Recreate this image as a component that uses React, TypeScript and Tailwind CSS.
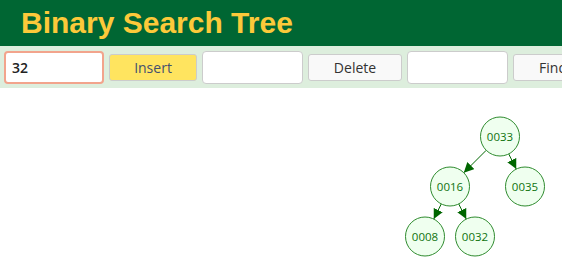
import React from "react";

type Node = { id: string; label: string; x: number; y: number };

const nodes: Node[] = [
  { id: "a", label: "0033", x: 500, y: 136.5 },
  { id: "b", label: "0016", x: 450, y: 186.5 },
  { id: "c", label: "0035", x: 525, y: 186.5 },
  { id: "d", label: "0008", x: 425, y: 236.5 },
  { id: "e", label: "0032", x: 475, y: 236.5 },
];

const edges: [string, string][] = [
  ["a", "b"],
  ["a", "c"],
  ["b", "d"],
  ["b", "e"],
];

const R = 19.5;
const TOP = 88;

function Tree() {
  const byId = Object.fromEntries(nodes.map((n) => [n.id, n]));
  return (
    <svg width={562} height={274 - TOP} className="block">
      <defs>
        <marker
          id="arrow"
          viewBox="0 0 10 10"
          refX="10"
          refY="5"
          markerWidth="10"
          markerHeight="10"
          markerUnits="userSpaceOnUse"
          orient="auto"
        >
          <path d="M0,0 L10,5 L0,10 z" fill="#006600" />
        </marker>
      </defs>
      {edges.map(([from, to]) => {
        const p = byId[from];
        const c = byId[to];
        const dx = c.x - p.x;
        const dy = c.y - p.y;
        const len = Math.hypot(dx, dy);
        const ux = dx / len;
        const uy = dy / len;
        return (
          <line
            key={from + to}
            x1={p.x + ux * R}
            y1={p.y - TOP + uy * R}
            x2={c.x - ux * R}
            y2={c.y - TOP - uy * R}
            stroke="#006600"
            strokeWidth={1}
            markerEnd="url(#arrow)"
          />
        );
      })}
      {nodes.map((n) => (
        <g key={n.id}>
          <circle cx={n.x} cy={n.y - TOP} r={R} fill="#efffef" stroke="#2e8b2e" strokeWidth={1} />
          <text
            x={n.x}
            y={n.y - TOP + 4}
            textAnchor="middle"
            fontSize={11.5}
            fill="#0f730f"
            fontFamily="'Open Sans', sans-serif"
          >
            {n.label}
          </text>
        </g>
      ))}
    </svg>
  );
}

export default function App() {
  return (
    <div className="w-[562px] h-[274px] overflow-hidden bg-white font-['Open_Sans',sans-serif]">
      <header className="h-[46px] bg-[#006633] pl-[21px] flex items-center">
        <h1 className="text-[30px] font-bold text-[#fcc93a] font-['Liberation_Sans',sans-serif] leading-none">
          Binary Search Tree
        </h1>
      </header>

      <div className="h-[42px] bg-[#ddeedd] flex items-center gap-[5px] pl-[4px] whitespace-nowrap">
        <input
          defaultValue="32"
          className="w-[100px] h-[33px] shrink-0 rounded-[4px] border-2 border-[#f2a48c] bg-white px-[6px] text-[14px] font-semibold text-[#222] outline-none"
        />
        <button className="w-[88px] h-[27px] shrink-0 rounded-[3px] border border-[#cccccc] bg-[#ffe45f] text-[14px] text-[#44506e]">
          Insert
        </button>
        <input className="w-[101px] h-[33px] shrink-0 rounded-[4px] border border-[#cccccc] bg-white outline-none" />
        <button className="w-[94px] h-[27px] shrink-0 rounded-[3px] border border-[#cccccc] bg-[#f9f9f9] text-[14px] text-[#333]">
          Delete
        </button>
        <input className="w-[101px] h-[33px] shrink-0 rounded-[4px] border border-[#cccccc] bg-white outline-none" />
        <button className="w-[80px] h-[27px] shrink-0 rounded-[3px] border border-[#cccccc] bg-[#f9f9f9] text-[14px] text-[#333]">
          Find
        </button>
      </div>

      <Tree />
    </div>
  );
}
